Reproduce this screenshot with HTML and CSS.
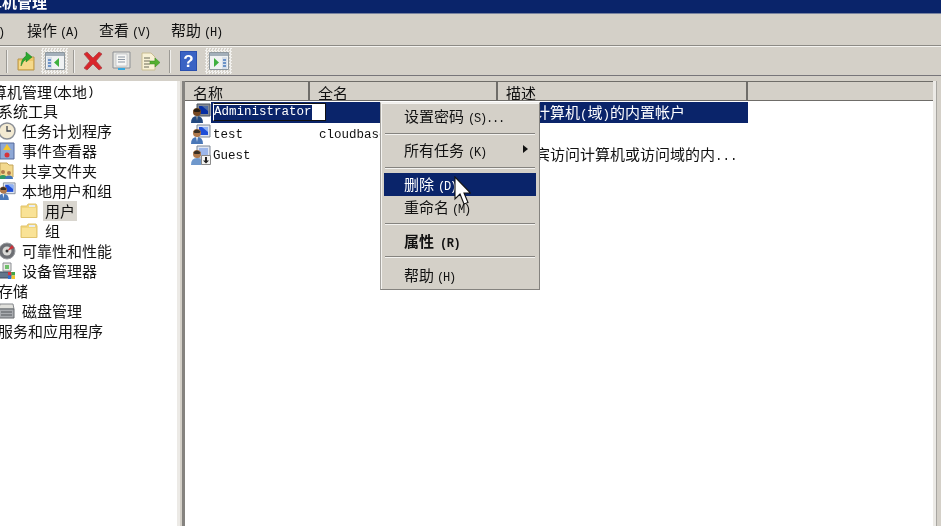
FILE: index.html
```html
<!DOCTYPE html>
<html lang="zh-CN">
<head>
  <meta charset="utf-8"/>
  <title>计算机管理</title>
  <link rel="stylesheet" href="styles.css">
</head>
<body>

<svg class="defs" width="0" height="0">
  <symbol id="i-folder" viewBox="0 0 18 16">
    <path d="M1 3h6l1-2h8l1 2v11.500H1z" fill="#f2d67c" stroke="#e0c36e"/>
    <path d="M2 5h14v9H2z" fill="#f9e296"/>
    <path d="M9 2h6v2H9z" fill="#e6edf4"/>
  </symbol>
  <symbol id="i-panel-left" viewBox="0 0 20 18">
    <path d="M.5 .5h19v17H.5z" fill="#f0f2f3" stroke="#8d979e"/>
    <path d="M1 1h18v3H1z" fill="#a3afba"/>
    <path d="M2 5h5v12H2z" fill="#d8e0ea"/>
    <path d="M3 7h3v2H3zM3 10h3v2H3zM3 13h3v2H3z" fill="#6d94c8"/>
    <path d="M14 6v9l-5-4.500z" fill="#3fb03f"/>
  </symbol>
  <symbol id="i-panel-right" viewBox="0 0 20 18">
    <path d="M.5 .5h19v17H.5z" fill="#f0f2f3" stroke="#8d979e"/>
    <path d="M1 1h18v3H1z" fill="#a3afba"/>
    <path d="M13 5h5v12h-5z" fill="#d8e0ea"/>
    <path d="M14 7h3v2h-3zM14 10h3v2h-3zM14 13h3v2h-3z" fill="#6d94c8"/>
    <path d="M5 6v9l5-4.500z" fill="#3fb03f"/>
  </symbol>
  <symbol id="i-user" viewBox="0 0 20 20">
    <path d="M6 1h13v12H6z" fill="#dfe6f2" stroke="#7f8896"/>
    <path d="M8 3h9v8H8z" fill="#1f4fd8"/>
    <path d="M11 3h6v5z" fill="#8fb2f4"/>
    <circle cx="6" cy="9" r="4" fill="#b07a4c"/>
    <path d="M2.500 7.500q3-4 7 0l-1 1.500H3.500z" fill="#3a3024"/>
    <path d="M0 20q0-7 6-7t6 7z" fill="#4a78b8"/>
    <path d="M5 13h2l-1 5z" fill="#eef1f5"/>
  </symbol>
  <symbol id="i-user-off" viewBox="0 0 20 20">
    <path d="M6 1h13v12H6z" fill="#dfe6f2" stroke="#7f8896"/>
    <path d="M8 3h9v8H8z" fill="#9db7ea"/>
    <circle cx="6" cy="9" r="4" fill="#b07a4c"/>
    <path d="M2.500 7.500q3-4 7 0l-1 1.500H3.500z" fill="#3a3024"/>
    <path d="M0 20q0-7 6-7t6 7z" fill="#6f98cc"/>
    <path d="M10.500 10.500h9v9h-9z" fill="#f4f4f2" stroke="#8a8a8a"/>
    <path d="M14 12h2v3.500h2l-3 3-3-3h2z" fill="#222"/>
  </symbol>
</svg>

<div class="window">
  <div class="titlebar"><span class="title-text">计算机管理</span></div>

  <div class="menubar">
    <span class="menu-item menu-cut"><span class="lat">)</span></span>
    <span class="menu-item">操作<span class="lat">(A)</span></span>
    <span class="menu-item">查看<span class="lat">(V)</span></span>
    <span class="menu-item">帮助<span class="lat">(H)</span></span>
  </div>

  <div class="toolbar">
    <span class="tool-sep"></span>
    <span class="tool">
      <svg width="19" height="20" viewBox="0 0 19 20">
        <path d="M1 8h6l1-2h9v13H1z" fill="#edc869" stroke="#b8954a"/>
        <path d="M2 10h14v8H2z" fill="#f5d98a"/>
        <path d="M4 15q0-7 5-10V1l6 5-6 5V8q-3 2-5 7z" fill="#2aa830" stroke="#1a7f22" stroke-width=".5"/>
      </svg>
    </span>
    <span class="tool tool-on tool-near"><svg width="20" height="18"><use href="#i-panel-left"/></svg></span>
    <span class="tool-sep tool-sep-gap"></span>
    <span class="tool">
      <svg width="22" height="20" viewBox="0 0 22 20">
        <path d="M2 3l3-2 6 6 6-6 3 2-6 7 6 7-3 2-6-6-6 6-3-2 6-7z" fill="#d9262b" stroke="#a8484a" stroke-width=".8"/>
      </svg>
    </span>
    <span class="tool tool-wide">
      <svg width="19" height="20" viewBox="0 0 19 20">
        <path d="M1 1h17v16H1z" fill="#e4e4e0" stroke="#8c8f94"/>
        <path d="M4 3h11v12H4z" fill="#f7f7f5" stroke="#aeb2b8" stroke-width=".6"/>
        <path d="M6 6h7M6 8.500h7M6 11h7" stroke="#8d97a4"/>
        <path d="M6 17h7v2H6z" fill="#35a8e0"/>
      </svg>
    </span>
    <span class="tool tool-wide">
      <svg width="20" height="19" viewBox="0 0 20 19">
        <path d="M1 1h9l4 4v13H1z" fill="#f8f1d6" stroke="#c9bd92"/>
        <path d="M3 6h6M3 9h6M3 12h6M3 15h5" stroke="#6b6b58"/>
        <path d="M9 9h5V6l5 4.500-5 4.500v-3H9z" fill="#54b030" stroke="#3a8a1f" stroke-width=".5"/>
      </svg>
    </span>
    <span class="tool-sep tool-sep-gap"></span>
    <span class="tool">
      <svg width="17" height="20" viewBox="0 0 17 20">
        <path d="M0 0h17v20H0z" fill="#2a4fae"/>
        <path d="M1 1h15v18H1z" fill="#3a63c4"/>
        <text x="8.500" y="16" text-anchor="middle" class="help-mark">?</text>
      </svg>
    </span>
    <span class="tool tool-on tool-far"><svg width="20" height="18"><use href="#i-panel-right"/></svg></span>
  </div>

  <div class="workspace">
    <div class="tree">
      <div class="tree-row tree-root"><span>计算机管理</span><span class="lat lat-tree">(</span><span>本地</span><span class="lat lat-tree">)</span></div>
      <div class="tree-row tree-top"><span>系统工具</span></div>
      <div class="tree-row tree-sub">
        <svg class="tree-icon" width="18" height="18" viewBox="0 0 18 18">
          <circle cx="9" cy="9" r="8" fill="#f3ead2" stroke="#8b8f96" stroke-width="1.500"/>
          <path d="M9 4v5h4" fill="none" stroke="#404650" stroke-width="1.300"/>
        </svg>
        <span>任务计划程序</span>
      </div>
      <div class="tree-row tree-sub">
        <svg class="tree-icon" width="18" height="18" viewBox="0 0 18 18">
          <path d="M2 1h14v16H2z" fill="#8ea8d6" stroke="#55699a"/>
          <path d="M9 2l4 6H5z" fill="#f4c62e"/>
          <circle cx="9" cy="13" r="2.500" fill="#d8323a"/>
        </svg>
        <span>事件查看器</span>
      </div>
      <div class="tree-row tree-sub">
        <svg class="tree-icon" width="18" height="18" viewBox="0 0 18 18">
          <path d="M2 1h7l2 2h4v12H2z" fill="#f3d98e" stroke="#c2a45a"/>
          <circle cx="5" cy="10" r="2" fill="#b07a4c"/>
          <path d="M1 17q0-4 4-4t4 4z" fill="#2f9a66"/>
          <circle cx="11" cy="11" r="2" fill="#b07a4c"/>
          <path d="M7 17q0-3.500 4-3.500t4 3.500z" fill="#3f74b8"/>
        </svg>
        <span>共享文件夹</span>
      </div>
      <div class="tree-row tree-sub">
        <svg class="tree-icon" width="18" height="18"><use href="#i-user"/></svg>
        <span>本地用户和组</span>
      </div>
      <div class="tree-row tree-leaf">
        <svg class="tree-icon" width="18" height="16"><use href="#i-folder"/></svg>
        <span class="tree-label tree-label-on">用户</span>
      </div>
      <div class="tree-row tree-leaf">
        <svg class="tree-icon" width="18" height="16"><use href="#i-folder"/></svg>
        <span class="tree-label">组</span>
      </div>
      <div class="tree-row tree-sub">
        <svg class="tree-icon" width="18" height="18" viewBox="0 0 18 18">
          <circle cx="9" cy="9" r="8" fill="#6d6f74" stroke="#9a9ca0"/>
          <circle cx="9" cy="9" r="4.500" fill="#d9d9d6"/>
          <path d="M9 9l5-6 2 3z" fill="#cf3038"/>
          <circle cx="9" cy="9" r="1.500" fill="#333"/>
        </svg>
        <span>可靠性和性能</span>
      </div>
      <div class="tree-row tree-sub">
        <svg class="tree-icon" width="18" height="18" viewBox="0 0 18 18">
          <path d="M5 1h8v8H5z" fill="#e9e9e6" stroke="#8c8f94"/>
          <path d="M7 3h4v4H7z" fill="#6fbf6a"/>
          <path d="M1 10h12v6H1z" fill="#62758c" stroke="#3f4b5c"/>
          <path d="M10 10h3.500v3.500H10z" fill="#d8323a"/>
          <path d="M13.500 10H17v3.500h-3.500z" fill="#3fa648"/>
          <path d="M10 13.500h3.500V17H10z" fill="#2f6fd0"/>
          <path d="M13.500 13.500H17V17h-3.500z" fill="#f4c62e"/>
        </svg>
        <span>设备管理器</span>
      </div>
      <div class="tree-row tree-top"><span>存储</span></div>
      <div class="tree-row tree-sub">
        <svg class="tree-icon" width="18" height="18" viewBox="0 0 18 18">
          <path d="M2 2h13l1 5H1z" fill="#e0e0dc" stroke="#85888c"/>
          <path d="M1 7h15v9H1z" fill="#a9acb0" stroke="#65686c"/>
          <path d="M3 10h11M3 13h11" stroke="#55585c"/>
        </svg>
        <span>磁盘管理</span>
      </div>
      <div class="tree-row tree-top"><span>服务和应用程序</span></div>
    </div>

    <div class="splitter"></div>

    <div class="list">
      <div class="list-head">
        <div class="head-cell col-name">名称</div>
        <div class="head-cell col-full">全名</div>
        <div class="head-cell col-desc">描述</div>
        <div class="head-cell col-rest"></div>
      </div>

      <div class="list-row row-selected">
        <div class="cell-icon"><svg width="20" height="20"><use href="#i-user"/></svg></div>
        <div class="cell-name cell-mark"></div>
        <div class="cell-full cell-mark"></div>
        <div class="cell-desc cell-mark">管理计算机<span class="lat lat-list">(</span>域<span class="lat lat-list">)</span>的内置帐户</div>
        <div class="edit-box"><span class="edit-text">Administrator</span></div>
      </div>
      <div class="list-row">
        <div class="cell-icon"><svg width="20" height="20"><use href="#i-user"/></svg></div>
        <div class="cell-name">test</div>
        <div class="cell-full">cloudbase-init</div>
        <div class="cell-desc"></div>
      </div>
      <div class="list-row">
        <div class="cell-icon"><svg width="20" height="20"><use href="#i-user-off"/></svg></div>
        <div class="cell-name">Guest</div>
        <div class="cell-full"></div>
        <div class="cell-desc">供来宾访问计算机或访问域的内<span class="lat lat-list">...</span></div>
      </div>
    </div>
  </div>
</div>

<div class="context-menu">
  <div class="cm-item">设置密码<span class="lat cm-key">(S)...</span></div>
  <div class="cm-sep"></div>
  <div class="cm-item">所有任务<span class="lat cm-key">(K)</span><span class="cm-arrow"></span></div>
  <div class="cm-sep"></div>
  <div class="cm-item cm-active">删除<span class="lat cm-key">(D)</span></div>
  <div class="cm-item cm-short">重命名<span class="lat cm-key-tight">(M)</span></div>
  <div class="cm-sep"></div>
  <div class="cm-item cm-short cm-bold">属性<span class="lat cm-key">(R)</span></div>
  <div class="cm-sep"></div>
  <div class="cm-item cm-last">帮助<span class="lat cm-key-tight">(H)</span></div>
</div>

<svg class="cursor" width="17" height="29" viewBox="0 0 17 29">
  <path d="M1 1v22l5-5 4 10 4-1.500-4-9.500h6.500z" fill="#fff" stroke="#111" stroke-width="1.100"/>
</svg>

</body>
</html>
```

FILE: styles.css
```css
html, body {
  margin: 0;
  padding: 0;
  width: 941px;
  height: 526px;
  overflow: hidden;
  background: #d4d0c8;
}
body {
  position: relative;
  font-family: "Noto Sans CJK SC", "Liberation Sans", sans-serif;
  font-size: 15px;
  line-height: 20px;
  color: #111;
  filter: blur(0.45px);
}
.defs {
  position: absolute;
}
.lat {
  font-family: "Liberation Mono", monospace;
  font-size: 12px;
  letter-spacing: -1.2px;
}
.window {
  display: flex;
  flex-direction: column;
  height: 526px;
  overflow: hidden;
}

/* title + menu + toolbar */
.titlebar {
  height: 13px;
  flex: none;
  overflow: hidden;
  background: #0a246a;
  border-bottom: 1px solid #77829f;
}
.title-text {
  display: block;
  margin: -8px 0 0 -28px;
  color: #fff;
  font-weight: bold;
  white-space: nowrap;
}
.menubar {
  height: 32px;
  flex: none;
  box-sizing: border-box;
  padding-top: 4px;
  display: flex;
  align-items: center;
  gap: 21px;
  border-bottom: 1px solid #8c8a85;
  white-space: nowrap;
}
.menu-item .lat {
  margin-left: 3px;
}
.menu-cut {
  width: 6px;
}
.menu-cut .lat {
  margin-left: -2px;
}
.toolbar {
  height: 28px;
  flex: none;
  display: flex;
  align-items: center;
  padding-left: 6px;
  border-top: 1px solid #f4f3f0;
  border-bottom: 1px solid #77757a;
}
.tool {
  width: 27px;
  height: 26px;
  display: flex;
  align-items: center;
  justify-content: center;
  flex: none;
}
.tool-wide {
  margin-left: 2px;
}
.tool-near {
  margin-left: 1px;
}
.tool-far {
  margin-left: 3px;
}
.tool-on {
  background: repeating-conic-gradient(#f2f1ee 0 25%, #d4d0c8 0 50%) 0 0 / 3px 3px;
}
.tool-sep {
  width: 2px;
  height: 23px;
  flex: none;
  margin-right: 5px;
  background: linear-gradient(to right, #9c9a95 50%, #f0efec 50%);
}
.tool-sep-gap {
  margin: 0 4px 0 5px;
}
.help-mark {
  font-family: "Liberation Sans", sans-serif;
  font-size: 17px;
  font-weight: bold;
  fill: #fff;
}

/* panes */
.workspace {
  flex: 1;
  display: flex;
  padding-top: 5px;
  padding-right: 5px;
  min-height: 0;
}
.tree {
  width: 177px;
  flex: none;
  background: #fff;
  overflow: hidden;
}
.tree-row {
  height: 20px;
  display: flex;
  align-items: center;
  white-space: nowrap;
}
.tree-root {
  margin-left: -23px;
  padding-top: 1px;
  height: 19px;
}
.tree-top,
.tree-sub {
  margin-left: -2px;
}
.tree-leaf {
  margin-left: 20px;
}
.tree-icon {
  flex: none;
  margin-right: 6px;
}
.tree-leaf .tree-icon {
  margin-right: 5px;
}
.tree-label {
  padding: 0 2px;
  height: 20px;
}
.tree-label-on {
  background: #d9d6cf;
}
.lat-tree {
  font-size: 12.5px;
  letter-spacing: -2.5px;
}
.splitter {
  width: 8px;
  flex: none;
  box-sizing: border-box;
  background: #d4d0c8;
  border-left: 3px solid #eceae6;
  border-right: 3px solid #85837f;
}
.list {
  flex: 1;
  min-width: 0;
  background: #fff;
  overflow: hidden;
  border-right: 3px solid #eceae6;
  box-shadow: 1px 0 0 #a8a6a1;
}
.list-head {
  height: 20px;
  display: flex;
  box-sizing: border-box;
  background: #d4d0c8;
  border-top: 1px solid #6f6d69;
  border-bottom: 1px solid #6f6d69;
  line-height: 21px;
}
.head-cell {
  box-sizing: border-box;
  padding-left: 8px;
  border-right: 2px solid #6f6d69;
  overflow: hidden;
}
.col-name {
  width: 125px;
}
.col-full {
  width: 188px;
}
.col-desc {
  width: 250px;
}
.col-rest {
  flex: 1;
  border-right: 0;
}
.list-row {
  position: relative;
  display: flex;
  height: 21px;
  line-height: 21px;
  white-space: nowrap;
}
.row-selected {
  margin-top: 1px;
}
.row-selected .cell-icon svg {
  filter: brightness(.6) saturate(1.4);
}
.cell-icon {
  width: 26px;
  flex: none;
  box-sizing: border-box;
  padding-left: 6px;
  display: flex;
  align-items: center;
}
.cell-name,
.cell-full {
  flex: none;
  font-family: "Liberation Mono", monospace;
  font-size: 12.5px;
  line-height: 25px;
  overflow: hidden;
}
.cell-name {
  width: 99px;
  padding-left: 2px;
  box-sizing: border-box;
}
.cell-full {
  width: 188px;
  padding-left: 9px;
  box-sizing: border-box;
}
.cell-desc {
  width: 250px;
  flex: none;
  box-sizing: border-box;
  padding-left: 7px;
  line-height: 19px;
  overflow: hidden;
}
.cell-mark {
  background: #0a246a;
  color: #fff;
}
.lat-list {
  font-size: 12.5px;
  letter-spacing: 0;
}
.edit-box {
  position: absolute;
  left: 28px;
  top: 1px;
  width: 113px;
  height: 18px;
  box-sizing: border-box;
  background: #fff;
  border: 1px solid #111;
  border-left-color: #fff;
  display: flex;
  align-items: center;
  font-family: "Liberation Mono", monospace;
  font-size: 12.5px;
}
.edit-text {
  background: #0a246a;
  color: #fff;
  line-height: 15px;
}

/* right click menu */
.context-menu {
  position: absolute;
  left: 380px;
  top: 102px;
  width: 160px;
  box-sizing: border-box;
  padding: 2px 3px;
  background: #d4d0c8;
  border: 1px solid #85837f;
  border-top-color: #f0efec;
  border-left-color: #a5a39f;
  box-shadow: inset 1px 1px 0 #f4f3f0;
}
.cm-item {
  position: relative;
  height: 23px;
  line-height: 21px;
  padding-left: 20px;
  white-space: nowrap;
}
.cm-short {
  height: 22px;
}
.cm-last {
  height: 25px;
  line-height: 25px;
}
.cm-key {
  margin-left: 4px;
}
.cm-key-tight {
  margin-left: 3px;
}
.cm-active {
  background: #0a246a;
  color: #fff;
}
.cm-bold {
  font-weight: bold;
  line-height: 23px;
}
.cm-bold .cm-key {
  font-weight: bold;
  letter-spacing: -.4px;
  margin-left: 6px;
}
.cm-sep {
  height: 11px;
  display: flex;
  align-items: center;
  padding: 0 1px;
}
.cm-sep::before {
  content: "";
  flex: 1;
  height: 1px;
  background: #85837f;
  box-shadow: 0 1px 0 #f4f3f0;
}
.cm-arrow {
  position: absolute;
  right: 8px;
  top: 6px;
  width: 0;
  height: 0;
  border-left: 5px solid #111;
  border-top: 4.500px solid transparent;
  border-bottom: 4.500px solid transparent;
}
.cursor {
  position: absolute;
  left: 454px;
  top: 176px;
}
```
